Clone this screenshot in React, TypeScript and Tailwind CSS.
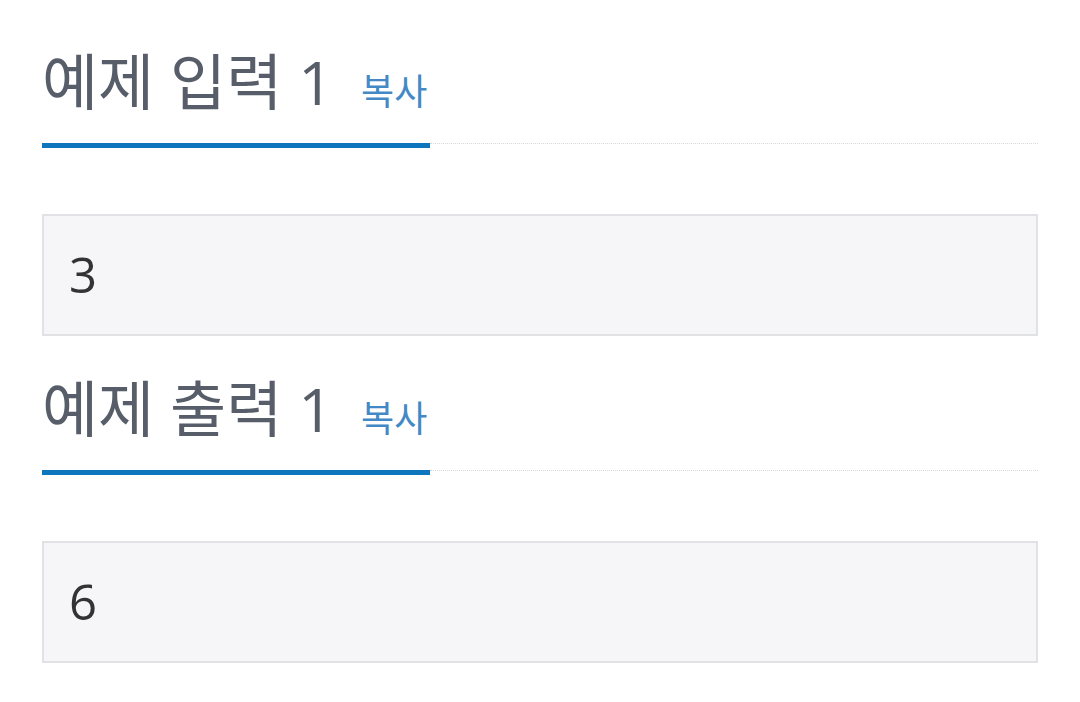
import React from "react";

const samples = [
  { title: "예제 입력 1", value: "3" },
  { title: "예제 출력 1", value: "6" },
];

function SampleHeader({ title }: { title: string }) {
  return (
    <div className="flex items-end">
      <div className="w-[388px] border-b-[5px] border-[#0d76bd] pb-[19px]">
        <h2 className="flex items-baseline text-[61px] leading-[64px] text-[#575e69] font-normal">
          {title}
          <span className="ml-[28px] text-[36px] text-[#4389c5]">복사</span>
        </h2>
      </div>
      <div className="flex-1 mb-[4px] border-b border-dotted border-[#d9d9d9]" />
    </div>
  );
}

export default function App() {
  return (
    <div
      className="w-[1080px] h-[702px] bg-white px-[42px] pt-[50px]"
      style={{ fontFamily: '"Open Sans", "Noto Sans CJK KR", sans-serif' }}
    >
      {samples.map((s, i) => (
        <div key={i} className="mb-[41px]">
          <SampleHeader title={s.title} />
          <pre
            className="mt-[66px] h-[122px] border-2 border-[#e1e2e6] bg-[#f6f6f8] px-[25px] flex items-center text-[49px] text-[#333]"
            style={{ fontFamily: '"Open Sans", sans-serif' }}
          >
            {s.value}
          </pre>
        </div>
      ))}
    </div>
  );
}
